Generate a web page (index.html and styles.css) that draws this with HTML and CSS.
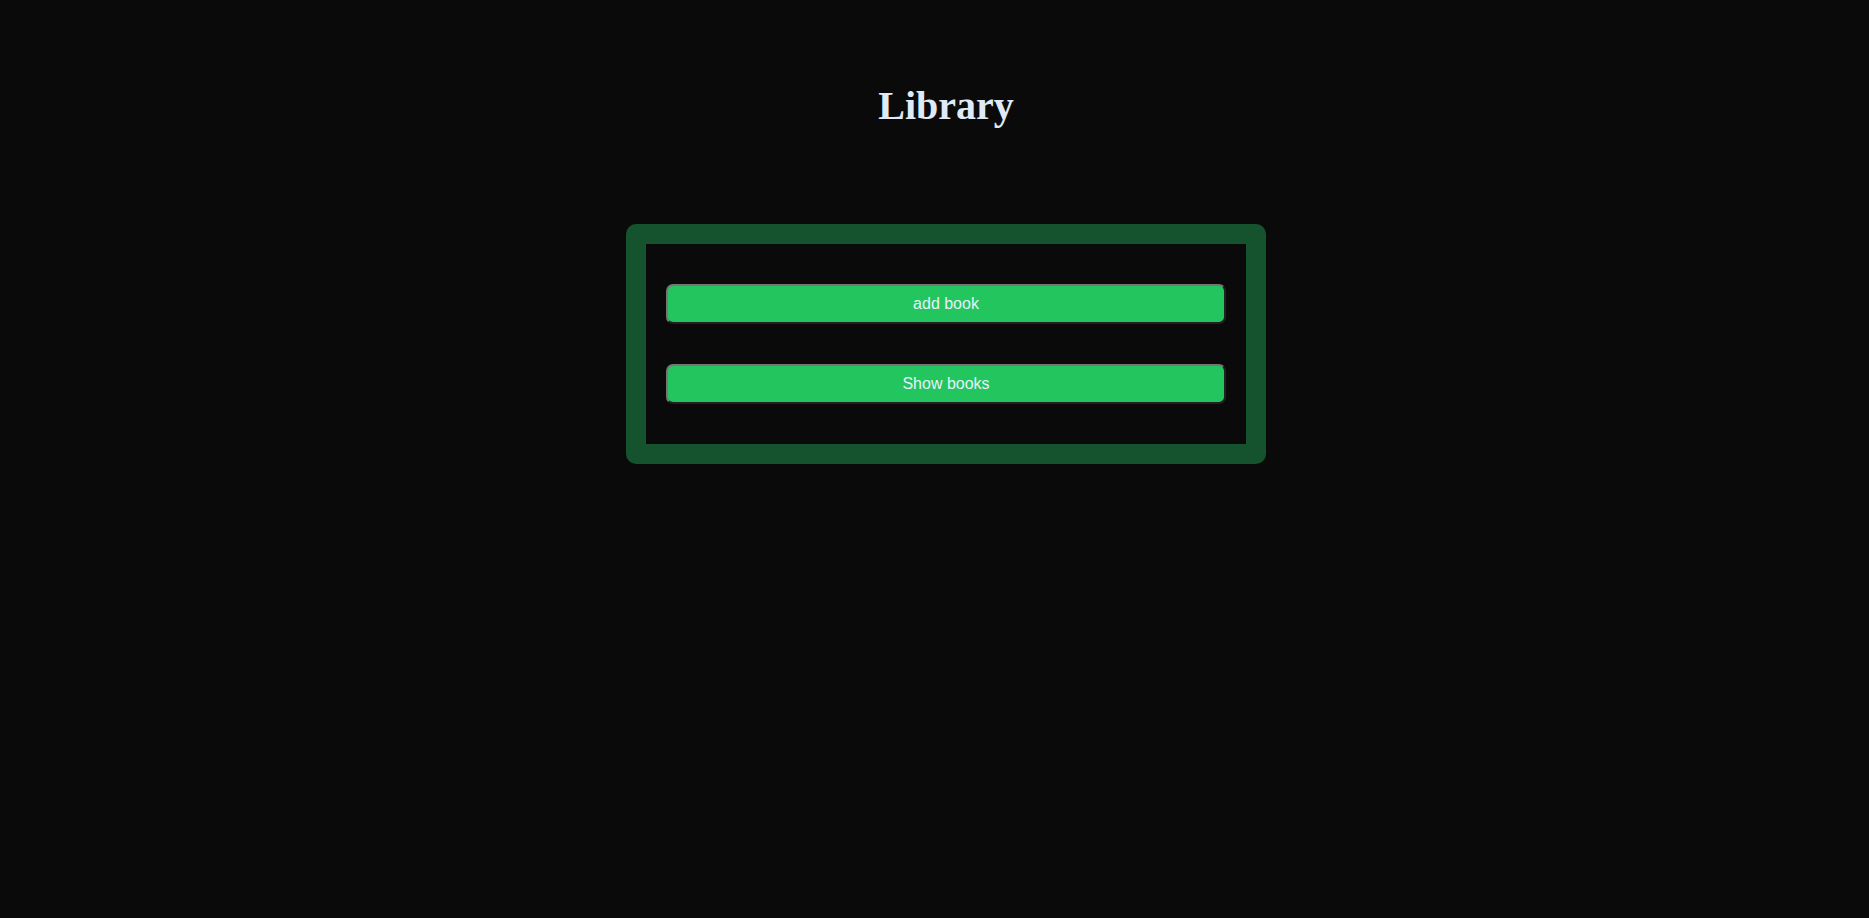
FILE: index.html
```html
<!DOCTYPE html>
<html lang="en">
<head>
<meta charset="utf-8">
<title>Library</title>
<link rel="stylesheet" href="styles.css">
</head>
<body>
<div class="page">
  <header class="header">
    <h1 class="title">Library</h1>
  </header>
  <main class="panel">
    <button class="btn" type="button">add book</button>
    <button class="btn" type="button">Show books</button>
  </main>
</div>
</body>
</html>
```

FILE: styles.css
```css
html, body {
  margin: 0;
  padding: 0;
  background: #0a0a0a;
  height: 100%;
}
.page {
  padding-left: 23px;
  display: flex;
  flex-direction: column;
  align-items: center;
}
.header {
  padding-top: 83px;
}
.title {
  margin: 0;
  font-family: "Liberation Serif", "Times New Roman", serif;
  font-weight: bold;
  font-size: 40px;
  line-height: 46px;
  color: #e0eaf6;
}
.panel {
  margin-top: 95px;
  width: 560px;
  padding: 20px;
  border: 20px solid #14532d;
  border-radius: 10px;
  display: flex;
  flex-direction: column;
}
.btn {
  margin: 20px 0;
  height: 40px;
  background: #22c55e;
  border: 2px outset #767676;
  border-radius: 7px;
  color: #e6f2fb;
  font-family: "Liberation Sans", Arial, sans-serif;
  font-size: 16px;
  padding: 0;
}
```
